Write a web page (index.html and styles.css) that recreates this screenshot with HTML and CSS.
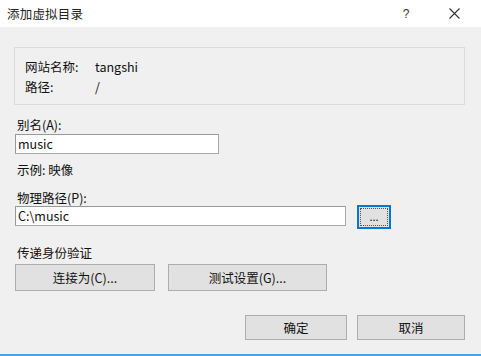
FILE: index.html
```html
<!DOCTYPE html>
<html lang="zh">
<head>
<meta charset="utf-8">
<link rel="stylesheet" href="styles.css">
</head>
<body>
<div class="dialog">
  <div class="titlebar">
    <span class="title">添加虚拟目录</span>
    <span class="help">?</span>
    <span class="close">
      <svg width="11" height="11" viewBox="0 0 11 11"><path d="M0.5 0.5 L10.5 10.5 M10.5 0.5 L0.5 10.5" stroke="#333" stroke-width="1.1" fill="none"/></svg>
    </span>
  </div>
  <div class="content">
    <div class="info">
      <div class="info-row"><span class="info-key">网站名称:</span><span>tangshi</span></div>
      <div class="info-row"><span class="info-key">路径:</span><span>/</span></div>
    </div>
    <div class="label first">别名(A):</div>
    <div class="input alias">music</div>
    <div class="label example">示例: 映像</div>
    <div class="label">物理路径(P):</div>
    <div class="path-row">
      <div class="input path">C:\music</div>
      <div class="browse"><span class="focus">...</span></div>
    </div>
    <div class="label auth">传递身份验证</div>
    <div class="auth-row">
      <div class="btn connect">连接为(C)...</div>
      <div class="btn test">测试设置(G)...</div>
    </div>
    <div class="footer">
      <div class="btn ok">确定</div>
      <div class="btn cancel">取消</div>
    </div>
  </div>
</div>
</body>
</html>
```
FILE: styles.css
```css
html, body {
  margin: 0;
  padding: 0;
}
body {
  width: 481px;
  height: 356px;
  overflow: hidden;
  background: #f0f0f0;
  font-family: "Noto Sans CJK SC", "Noto Sans", sans-serif;
  font-size: 12.5px;
  color: #111;
}
.dialog {
  width: 481px;
  height: 356px;
  box-sizing: border-box;
  border-bottom: 2px solid #4ba1e2;
  display: flex;
  flex-direction: column;
}
.titlebar {
  height: 27px;
  background: #fff;
  display: flex;
  align-items: center;
  padding-left: 7px;
  flex-shrink: 0;
}
.title {
  font-size: 12.5px;
  color: #222;
  flex: 1;
  letter-spacing: 0.2px;
}
.help {
  font-family: "Liberation Sans", sans-serif;
  font-size: 12px;
  color: #333;
  width: 12px;
  text-align: center;
  margin-right: 37px;
}
.close {
  display: flex;
  margin-right: 21px;
}
.content {
  padding: 20px 16px 0 15px;
  display: flex;
  flex-direction: column;
  flex: 1;
}
.info {
  border: 1px solid #dcdcdc;
  margin-left: -1px;
  padding: 9px 0 0 10px;
  box-sizing: border-box;
  height: 58px;
}
.info-row {
  display: flex;
  height: 20px;
  line-height: 20px;
}
.info-key {
  width: 70px;
}
.label {
  height: 18px;
  line-height: 18px;
  padding-left: 2px;
}
.label.first {
  margin-top: 11px;
}
.input {
  background: #fff;
  border: 1px solid #a8a8a8;
  border-top-color: #999;
  border-left-color: #999;
  box-sizing: border-box;
  height: 20px;
  line-height: 18px;
  padding-left: 2px;
}
.alias {
  width: 204px;
}
.example {
  margin-top: 7px;
}
.label.example + .label {
  margin-top: 10px;
}
.path-row {
  display: flex;
  align-items: flex-start;
  margin-top: -1px;
}
.path {
  width: 331px;
}
.browse {
  margin-left: 11px;
  margin-top: -1px;
  width: 34px;
  height: 24px;
  box-sizing: border-box;
  border: 2px solid #0078d7;
  background: #e1e1e1;
  padding: 1px;
  display: flex;
}
.focus {
  flex: 1;
  border: 1px dotted #555;
  text-align: center;
  line-height: 14px;
  font-size: 11px;
}
.label.auth {
  margin-top: 15px;
}
.auth-row {
  display: flex;
  gap: 13px;
  margin-top: 2px;
}
.btn {
  background: #e1e1e1;
  border: 1px solid #adadad;
  box-sizing: border-box;
  height: 27px;
  display: flex;
  align-items: center;
  justify-content: center;
}
.connect {
  width: 140px;
}
.test {
  width: 159px;
}
.footer {
  display: flex;
  justify-content: flex-end;
  gap: 10px;
  margin-top: 24px;
}
.ok {
  width: 102px;
  height: 25px;
}
.cancel {
  width: 108px;
  height: 25px;
}
```
